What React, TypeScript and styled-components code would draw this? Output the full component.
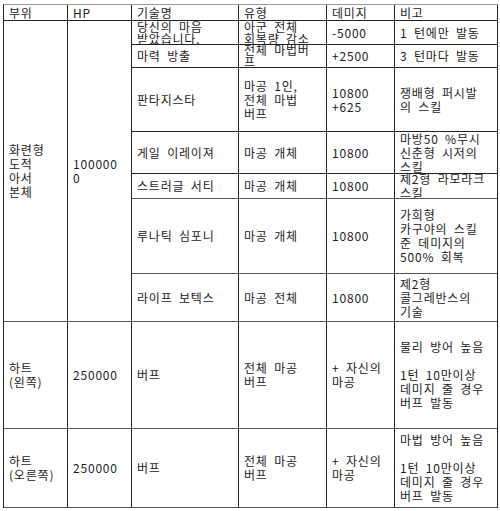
import React from 'react'
import styled, { createGlobalStyle } from 'styled-components'

const GlobalStyle = createGlobalStyle`
  html, body {
    margin: 0;
    padding: 0;
    background: #ffffff;
  }
  body {
    padding: 4px 0 0 3px;
  }
`

const Table = styled.div`
  display: grid;
  grid-template-columns: 64px 64px 107px 88px 68px 103px;
  grid-template-rows: 16px 24px 23px 64px 42px 25px 75px 48px 107px 79px;
  width: max-content;
  border-top: 1px solid #9a9a9a;
  border-left: 1px solid #222222;
  font-family: "Noto Sans CJK KR", "Noto Sans", sans-serif;
  font-size: 12px;
  line-height: 14px;
  letter-spacing: 0.8px;
  word-spacing: 3px;
  color: #1c1c1c;
`

const Cell = styled.div<{ $span?: number; $line?: string; $tight?: boolean }>`
  box-sizing: border-box;
  display: flex;
  align-items: center;
  padding: 0 4px 0 5px;
  overflow: hidden;
  white-space: nowrap;
  line-height: ${(p) => (p.$tight ? '12px' : '14px')};
  border-right: 1px solid #222222;
  border-bottom: 1px solid ${(p) => p.$line || '#222222'};
  grid-row: ${(p) => (p.$span ? `span ${p.$span}` : 'auto')};
`

const HeadCell = styled(Cell)`
  align-items: flex-start;
  padding-top: 1px;
`

const Lines = styled.div`
  display: flex;
  flex-direction: column;
`

type Skill = {
  name: string[]
  kind: string[]
  damage: string[]
  note: string[]
  line?: string
  tight?: boolean
}

const skills: Skill[] = [
  { name: ['당신의 마음', '받았습니다.'], kind: ['아군 전체', '회복량 감소'], damage: ['-5000'], note: ['1 턴에만 발동'], tight: true },
  { name: ['마력 방출'], kind: ['전체 마법버', '프'], damage: ['+2500'], note: ['3 턴마다 발동'], tight: true },
  { name: ['판타지스타'], kind: ['마공 1인,', '전체 마법', '버프'], damage: ['10800', '+625'], note: ['쟁배형 퍼시발', '의 스킬'] },
  { name: ['게일 이레이져'], kind: ['마공 개체'], damage: ['10800'], note: ['마방50 %무시', '신춘형 시저의', '스킬'] },
  { name: ['스트러글 서티'], kind: ['마공 개체'], damage: ['10800'], note: ['제2형 라모라크', '스킬'], line: '#555' },
  { name: ['루나틱 심포니'], kind: ['마공 개체'], damage: ['10800'], note: ['가희형', '카구야의 스킬', '준 데미지의', '500% 회복'], line: '#555' },
  { name: ['라이프 보텍스'], kind: ['마공 전체'], damage: ['10800'], note: ['제2형', '콜그레반스의', '기술'], line: '#555' },
]

const hearts = [
  { part: ['하트', '(왼쪽)'], guard: '물리 방어 높음' },
  { part: ['하트', '(오른쪽)'], guard: '마법 방어 높음' },
]

const Text = ({ lines }: { lines: string[] }) => (
  <Lines>
    {lines.map((l, i) => (
      <span key={i}>{l === '' ? '\u00a0' : l}</span>
    ))}
  </Lines>
)

const App = () => {
  return (
    <>
      <GlobalStyle />
      <Table>
        {['부위', 'HP', '기술명', '유형', '데미지', '비고'].map((h) => (
          <HeadCell key={h}>{h}</HeadCell>
        ))}

        <Cell $span={7} $line="#555">
          <Text lines={['화련형', '도적', '아서', '본체']} />
        </Cell>
        <Cell $span={7} $line="#555">
          <Text lines={['100000', '0']} />
        </Cell>

        {skills.map((s, i) => (
          <React.Fragment key={i}>
            <Cell $line={s.line} $tight={s.tight}>
              <Text lines={s.name} />
            </Cell>
            <Cell $line={s.line} $tight={s.tight}>
              <Text lines={s.kind} />
            </Cell>
            <Cell $line={s.line} $tight={s.tight}>
              <Text lines={s.damage} />
            </Cell>
            <Cell $line={s.line} $tight={s.tight}>
              <Text lines={s.note} />
            </Cell>
          </React.Fragment>
        ))}

        {hearts.map((h, i) => (
          <React.Fragment key={i}>
            <Cell $line="#555">
              <Text lines={h.part} />
            </Cell>
            <Cell $line="#555">250000</Cell>
            <Cell $line="#555">버프</Cell>
            <Cell $line="#555">
              <Text lines={['전체 마공', '버프']} />
            </Cell>
            <Cell $line="#555">
              <Text lines={['+ 자신의', '마공']} />
            </Cell>
            <Cell $line="#555">
              <Text lines={[h.guard, '', '1턴 10만이상', '데미지 줄 경우', '버프 발동']} />
            </Cell>
          </React.Fragment>
        ))}
      </Table>
    </>
  )
}

export default App
